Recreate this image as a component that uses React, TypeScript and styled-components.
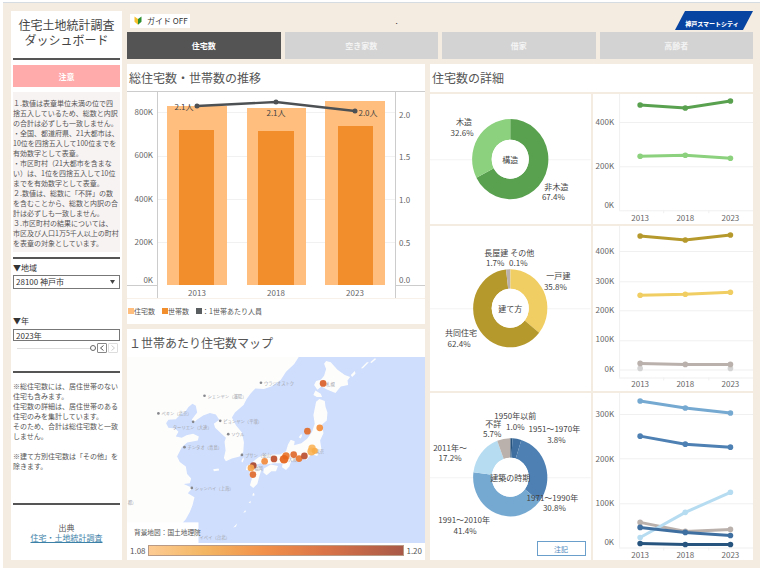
import React, { useState } from 'react';
import styled, { createGlobalStyle, css } from 'styled-components';

const JP = '"Noto Sans CJK JP", "Noto Sans", sans-serif';

const GlobalStyle = createGlobalStyle`
  * { box-sizing: border-box; }
  body { margin: 0; background: #fff; font-family: ${JP}; color: #555; }
  button, input, select { font-family: inherit; color: inherit; margin: 0; }
`;

const Page = styled.div`
  border-top: 1px solid #d5dce2;
  margin: 2px 0 2px 3px;
`;

const Board = styled.div`
  display: grid;
  grid-template-columns: 111fr 626fr;
  gap: 5px;
  padding: 8px 7px 8px 8px;
  background: #f5ece1;
`;

const Sidebar = styled.aside`
  display: flex;
  flex-direction: column;
  min-width: 0;
  padding: 0 2px;
  background: #fff;
`;

const Title = styled.h1`
  margin: 6px 0 11px;
  font-size: 12px;
  line-height: 15px;
  font-weight: 400;
  text-align: center;
  white-space: nowrap;
  color: #444;
`;

const Rule = styled.hr`
  width: 100%;
  height: 2px;
  margin: 0;
  border: 0;
  background: #555;
`;

const Notice = styled.button`
  height: 22px;
  margin: 5px 0;
  padding: 0;
  border: 0;
  background: #ffabab;
  font-size: 8px;
  font-weight: 700;
  && { color: #fff; }
`;

const Notes = styled.div<{ $shaded?: boolean }>`
  font-size: 7px;
  line-height: 10px;
  white-space: pre-line;
  ${(p) => p.$shaded && css`
    margin-bottom: 5px;
    padding: 6px 0 4px;
    background: #f8f3f3;
  `}
`;

const Field = styled.label`
  display: flex;
  flex-direction: column;
  font-size: 8px;
  line-height: 10px;
  color: #333;
`;

const control = css`
  width: 100%;
  padding: 0 2px;
  border: 1px solid #777;
  border-radius: 0;
  background: #fff;
  font-size: 8px;
  line-height: 10px;
`;

const SelectWrap = styled.span`
  display: grid;
  align-items: center;
  margin-top: 2px;
  & > * { grid-area: 1 / 1; }
  svg { justify-self: end; margin-right: 5px; pointer-events: none; }
`;

const Select = styled.select`
  ${control}
  height: 14px;
  appearance: none;
`;

const YearBox = styled.input`
  ${control}
  height: 12px;
  margin-top: 3px;
`;

const SliderRow = styled.div`
  display: flex;
  align-items: center;
  gap: 1px;
  margin: 2px 2px 18px 4px;
`;

const Slider = styled.input`
  flex: 1;
  min-width: 0;
  height: 8px;
  appearance: none;
  background: linear-gradient(#ddd, #ddd) center / 100% 1px no-repeat;
  &::-webkit-slider-thumb {
    appearance: none;
    width: 6px;
    height: 6px;
    border: 1px solid #666;
    border-radius: 50%;
    background: #fff;
  }
`;

const Step = styled.button<{ $faint?: boolean }>`
  display: flex;
  align-items: center;
  justify-content: center;
  width: 10px;
  height: 10px;
  padding: 0;
  border: 1px solid ${(p) => (p.$faint ? '#ddd' : '#888')};
  border-radius: 1px;
  background: #fff;
  && { color: ${(p) => (p.$faint ? '#ccc' : '#555')}; }
`;

const Source = styled.p`
  margin: 18px 0 12px;
  font-size: 8px;
  line-height: 10px;
  text-align: center;
  a { color: #3c82a8; }
`;

const Main = styled.main`
  display: flex;
  flex-direction: column;
  min-width: 0;
`;

const TopBar = styled.header`
  display: grid;
  grid-template-columns: 1fr auto 1fr;
  align-items: center;
  height: 19px;
  margin-bottom: 2px;
  padding-left: 3px;
  & > :last-child { justify-self: end; }
`;

const Guide = styled.button`
  display: flex;
  align-items: center;
  justify-self: start;
  gap: 5px;
  height: 14px;
  padding: 0 2px 0 4px;
  border: 0;
  background: #fff;
  font-size: 8px;
  && { color: #333; }
`;

const Dot = styled.span`
  padding-right: 90px;
  font-size: 8px;
  line-height: 8px;
  color: #222;
`;

const Tabs = styled.nav`
  display: grid;
  grid-template-columns: repeat(4, 1fr);
  gap: 4px;
  margin-bottom: 5px;
`;

const Tab = styled.button<{ $active: boolean }>`
  height: 27px;
  padding: 0;
  border: 0;
  background: ${(p) => (p.$active ? '#545454' : '#d3d3d3')};
  font-size: 8px;
  font-weight: 700;
  && { color: ${(p) => (p.$active ? '#fff' : '#f4f4f4')}; }
`;

const Columns = styled.div`
  display: grid;
  grid-template-columns: 298fr 323fr;
  gap: 5px;
  flex: 1;
`;

const Stack = styled.div<{ $gap: number }>`
  display: flex;
  flex-direction: column;
  gap: ${(p) => p.$gap}px;
  min-width: 0;
`;

const Panel = styled.section<{ $grow?: boolean }>`
  display: flex;
  flex-direction: column;
  min-width: 0;
  background: #fff;
  ${(p) => p.$grow && 'flex: 1;'}
`;

const Heading = styled.h2<{ $lined?: boolean }>`
  margin: 0;
  padding: 4px 2px;
  font-size: 12px;
  line-height: 19px;
  font-weight: 400;
  color: #555;
  border-bottom: 1px solid ${(p) => (p.$lined ? '#ccc' : '#fff')};
`;

const Drawing = styled.svg`
  display: block;
  width: 100%;
  height: auto;
`;

const AxisText = styled.text`
  font-family: ${JP};
  font-size: 8px;
  fill: #666;
  dominant-baseline: central;
`;

const LabelText = styled.text`
  font-family: ${JP};
  font-size: 8px;
  fill: #444;
  text-anchor: middle;
  dominant-baseline: central;
`;

const CityText = styled.text`
  font-family: ${JP};
  font-size: 13px;
  fill: #a3a5ab;
  dominant-baseline: central;
`;

const CreditText = styled(CityText)`
  font-size: 20px;
  fill: #555;
`;

const Legend = styled.ul`
  display: flex;
  gap: 7px;
  margin: 0;
  padding: 7px 1px 8px;
  border-top: 1px solid #f8f1ea;
  list-style: none;
  font-size: 7px;
  line-height: 10px;
`;

const LegendItem = styled.li<{ $color: string }>`
  display: flex;
  align-items: center;
  &::before {
    content: '';
    width: 6px;
    height: 6px;
    background: ${(p) => p.$color};
  }
`;

const Scale = styled.div`
  display: flex;
  align-items: center;
  gap: 2px;
  padding: 2px 3px 4px;
  font-size: 8px;
  line-height: 11px;
`;

const Ramp = styled.div`
  flex: 1;
  height: 11px;
  border: 1px solid #b99b85;
  background: linear-gradient(90deg, #fdcb93, #f3b662 22%, #f2914a 45%, #d97348 70%, #a85948);
`;

const DetailRow = styled.div`
  display: grid;
  grid-template-columns: 1fr 1fr;
  gap: 2px;
`;

const NoteRow = styled.div`
  display: flex;
  justify-content: flex-end;
  padding: 0 5px;
`;

const NoteButton = styled.button`
  width: 49px;
  height: 15px;
  padding: 0;
  border: 1px solid #6b9fcb;
  background: #fff;
  font-size: 7px;
  line-height: 10px;
  && { color: #4a87bd; }
`;

const Group = styled.div<{ $top: number; $bottom: number }>`
  padding: ${(p) => p.$top}px 0 ${(p) => p.$bottom}px;
`;

const LogoText = styled.text`
  font-family: ${JP};
  font-size: 6px;
  font-weight: 900;
  fill: #fff;
  text-anchor: middle;
  dominant-baseline: central;
`;

const YEARS = ['2013', '2018', '2023'];

function Combo() {
  const bars = [
    { x: 40, w: 60, y: 14, ix: 52, iw: 35, iy: 38 },
    { x: 120, w: 59, y: 16, ix: 131, iw: 36, iy: 39 },
    { x: 198, w: 60, y: 9, ix: 211, iw: 35, iy: 34 },
  ];
  const points = [[70, 14], [149, 10], [228, 19]];
  const left: [string, number][] = [['800K', 19], ['600K', 62], ['400K', 106], ['200K', 149], ['0K', 187]];
  const right: [string, number][] = [['2.0', 22], ['1.5', 64], ['1.0', 107], ['0.5', 150], ['0.0', 187]];
  return (
    <Drawing viewBox="0 0 298 206" role="img" aria-label="総住宅数・世帯数の推移">
      {[20, 64, 107, 150].map((y) => <path key={y} d={`M30 ${y}.5H268`} stroke="#f1f1f1" />)}
      {bars.map((b) => (
        <g key={b.x}>
          <rect x={b.x} y={b.y} width={b.w} height={193 - b.y} fill="#ffbe7d" />
          <rect x={b.ix} y={b.iy} width={b.iw} height={193 - b.iy} fill="#f28e2b" />
        </g>
      ))}
      <path d="M30.5 0V206M268.5 0V206M0 193.5H30M268 193.5H298" stroke="#ccc" fill="none" />
      <polyline points={points.map((p) => p.join(',')).join(' ')} fill="none" stroke="#4e5154" strokeWidth="2.4" />
      {points.map(([x, y]) => <circle key={x} cx={x} cy={y} r="2.5" fill="#4e5154" />)}
      <LabelText x="57" y="14">2.1人</LabelText>
      <LabelText x="149" y="20">2.1人</LabelText>
      <LabelText x="241" y="20">2.0人</LabelText>
      {left.map(([t, y]) => <AxisText key={t} x="26" y={y} textAnchor="end">{t}</AxisText>)}
      {right.map(([t, y]) => <AxisText key={t} x="272" y={y}>{t}</AxisText>)}
      {YEARS.map((t, i) => <AxisText key={t} x={points[i][0]} y="200" textAnchor="middle">{t}</AxisText>)}
    </Drawing>
  );
}

type Slice = { share: number; color: string };
type Tag = { name: string; x: number; y: number; value: string; vx: number; vy: number };
type DonutProps = { height: number; cy: number; rx: number; ry: number; title: string; slices: Slice[]; tags: Tag[] };

function Donut({ height, cy, rx, ry, title, slices, tags }: DonutProps) {
  const cx = 80;
  const at = (t: number, a: number, b: number) =>
    `${(cx + a * Math.sin(t * 2 * Math.PI)).toFixed(2)} ${(cy - b * Math.cos(t * 2 * Math.PI)).toFixed(2)}`;
  const total = slices.reduce((s, v) => s + v.share, 0);
  let start = 0;
  return (
    <Drawing viewBox={`0 0 160 ${height}`} role="img" aria-label={title}>
      <path d={`M0 ${cy}.5H160`} stroke="#f3f3f3" />
      {slices.map((s) => {
        const a = start;
        const b = start + s.share / total;
        start = b;
        const big = b - a > 0.5 ? 1 : 0;
        return (
          <path
            key={s.color}
            fill={s.color}
            d={`M${at(a, rx, ry)}A${rx} ${ry} 0 ${big} 1 ${at(b, rx, ry)}L${at(b, 18.5, 19.5)}A18.5 19.5 0 ${big} 0 ${at(a, 18.5, 19.5)}Z`}
          />
        );
      })}
      <ellipse cx={cx} cy={cy} rx="18.5" ry="19.5" fill="#fff" />
      <LabelText x={cx} y={cy}>{title}</LabelText>
      {tags.map((t) => (
        <g key={t.name}>
          <LabelText x={t.x} y={t.y}>{t.name}</LabelText>
          <LabelText x={t.vx} y={t.vy}>{t.value}</LabelText>
        </g>
      ))}
    </Drawing>
  );
}

type LinesProps = {
  label: string; height: number; grid: number[]; base: number; yearY: number;
  ticks: [string, number][]; series: { color: string; ys: number[] }[]; strays?: number[][];
};

function Lines({ label, height, grid, base, yearY, ticks, series, strays = [] }: LinesProps) {
  const xs = [47, 92, 137];
  return (
    <Drawing viewBox={`0 0 160 ${height}`} role="img" aria-label={label}>
      {[...grid, base].map((y) => <path key={y} d={`M26 ${y}.5H160`} stroke="#f0f0f0" />)}
      <path d={`M26.5 0V${base}M70.5 ${base}v3M115.5 ${base}v3`} stroke="#f0f0f0" />
      {strays.map(([i, y]) => <circle key={i} cx={xs[i]} cy={y} r="2.8" fill="#d3d3d3" />)}
      {series.map((s) => (
        <g key={s.color}>
          <polyline points={s.ys.map((y, i) => `${xs[i]},${y}`).join(' ')} fill="none" stroke={s.color} strokeWidth="3" />
          {s.ys.map((y, i) => <circle key={i} cx={xs[i]} cy={y} r="2.8" fill={s.color} />)}
        </g>
      ))}
      {ticks.map(([t, y]) => <AxisText key={t} x="21" y={y} textAnchor="end">{t}</AxisText>)}
      {YEARS.map((t, i) => <AxisText key={t} x={xs[i]} y={yearY} textAnchor="middle">{t}</AxisText>)}
    </Drawing>
  );
}

const CITIES: [string, number, number, boolean][] = [
  ['ウラジオストク', 409, 173, true],
  ['シェンヤン（瀋陽）', 240, 212, true],
  ['ペキン（北京）', 102, 265, true],
  ['ピョンヤン（平壌）', 287, 287, true],
  ['ソウル', 311, 327, true],
  ['チンタオ（青島）', 180, 366, true],
  ['プサン（釜山）', 352, 389, true],
  ['シャンハイ（上海）', 202, 488, true],
  ['ターリエン（大連）', 136, 307, false],
  ['イペイ（台北）', 216, 634, false],
  ['札幌', 595, 178, false],
  ['東京', 563, 377, false],
  ['福岡', 380, 429, false],
  ['大阪', 482, 402, false],
  ['都）', 1, 529, false],
];

const PINS: [number, number, number, string][] = [
  [595, 175, 10, '#d9622b'], [585, 308, 10, '#f28e3b'], [548, 318, 10, '#e06d2c'],
  [386, 421, 10, '#a8482f'], [379, 428, 10, '#f6a650'], [385, 448, 10, '#df6a2f'],
  [420, 408, 10, '#f08b3c'], [448, 401, 10, '#bd4f2c'], [484, 392, 11, '#e9772f'],
  [507, 388, 10, '#e06c30'], [523, 400, 10, '#e9772f'], [539, 392, 10, '#bb5030'],
  [478, 402, 13, '#e5641c'], [562, 369, 11, '#fbb75e'], [560, 379, 12, '#fbb456'], [570, 377, 9, '#f8ac48'],
];

function MapView() {
  return (
    <Drawing viewBox="8 96 892 557" role="img" aria-label="日本周辺の地図">
      <rect x="8" y="96" width="892" height="557" fill="#cfdefd" />
      <g fill="#fdfdfc">
        <path d="M8 96H522L508 118L484 140L468 165L440 184L418 192L392 190L378 205L366 222L357 240L331 262L322 277L334 300L352 322L358 352L356 380L345 394L322 400L304 408L298 398L303 376L300 350L304 338L290 325L272 308L268 296L284 284L274 268L256 264L236 271L217 284L207 293L202 283L218 262L214 242L204 236L192 246L184 258L168 268L154 282L132 284L125 294L132 308L152 310L162 320L154 334L172 338L186 330L206 326L223 334L220 346L188 352L172 366L158 394L166 410L184 424L188 446L200 460L196 474L178 476L204 488L190 504L210 516L204 540L196 560L184 582L162 606L150 624L130 642L8 653Z" />
        <path d="M604 108L618 112L638 134L660 150L676 156L668 166L670 180L648 184L632 204L608 194L590 184L578 194L568 180L574 168L588 164L598 152L604 132L598 116ZM572 196L588 206L592 216L576 216L566 210Z" />
        <path d="M574 230L584 222L600 228L602 244L608 262L606 286L592 298L596 324L586 346L590 372L577 392L560 386L545 404L528 400L520 408L500 406L494 424L484 434L472 426L474 414L450 414L424 418L408 414L390 420L384 410L402 396L420 388L446 388L466 388L484 378L490 358L498 344L510 348L508 360L530 354L548 340L562 320L570 296L566 270Z" />
        <path d="M418 430L438 418L460 422L454 438L440 438L426 450L416 442ZM366 422L382 414L400 422L410 434L404 454L398 476L386 488L376 480L382 460L374 450L376 436L364 434Z" />
        <path d="M678 150L690 138L692 146L682 156ZM708 130L726 112L732 112L714 130ZM736 112L750 100L754 102L740 114ZM266 432L282 430L284 436L268 438ZM350 408L356 396L358 402L354 412ZM522 336L530 326L532 332L528 340ZM384 506L388 502L390 510L384 512ZM372 532L378 526L378 534ZM356 562L362 554L364 560ZM326 606L338 594L334 604Z" />
      </g>
      {CITIES.map(([name, x, y, dot]) => (
        <g key={name}>
          {dot && <circle cx={x} cy={y} r="4" fill="#85878c" />}
          <CityText x={x + 9} y={y}>{name}</CityText>
        </g>
      ))}
      <circle cx="206" cy="290" r="4" fill="#85878c" />
      {PINS.map(([x, y, r, c]) => <circle key={`${x}-${y}`} cx={x} cy={y} r={r} fill={c} opacity="0.93" />)}
      <rect x="8" y="591" width="214" height="62" fill="#fff" />
      <CreditText x="29" y="621">背景地図：国土地理院</CreditText>
    </Drawing>
  );
}

const NOTE_TOP = `１.数値は表章単位未満の位で四
捨五入しているため、総数と内訳
の合計は必ずしも一致しません。
・全国、都道府県、21大都市は、
10位を四捨五入して100位までを
有効数字として表章。
・市区町村（21大都市を含まな
い）は、1位を四捨五入して10位
までを有効数字として表章。
２.数値は、総数に「不詳」の数
を含むことから、総数と内訳の合
計は必ずしも一致しません。
３.市区町村の結果については、
市区及び人口1万5千人以上の町村
を表章の対象としています。`;

const NOTE_BOTTOM = `※総住宅数には、居住世帯のない
住宅も含みます。
住宅数の詳細は、居住世帯のある
住宅のみを集計しています。
そのため、合計は総住宅数と一致
しません。

※建て方別住宅数は「その他」を
除きます。`;

export default function App() {
  const [tab, setTab] = useState('住宅数');
  const [year, setYear] = useState(2023);
  return (
    <>
      <GlobalStyle />
      <Page lang="ja">
        <Board>
          <Sidebar>
            <Title>住宅土地統計調査<br />ダッシュボード</Title>
            <Rule />
            <Notice type="button">注意</Notice>
            <Notes $shaded>{NOTE_TOP}</Notes>
            <Rule />
            <Group $top={4} $bottom={27}>
              <Field>
                ▼地域
                <SelectWrap>
                  <Select defaultValue="28100"><option value="28100">28100 神戸市</option></Select>
                  <svg width="5" height="4" viewBox="0 0 5 4"><path d="M0 0H5L2.5 4Z" fill="#444" /></svg>
                </SelectWrap>
              </Field>
            </Group>
            <Field>
              ▼年
              <YearBox value={`${year}年`} readOnly />
            </Field>
            <SliderRow>
              <Slider type="range" aria-label="年" min={2013} max={2023} step={5} value={year} onChange={(e) => setYear(Number(e.target.value))} />
              <Step type="button" aria-label="前の年" onClick={() => setYear(Math.max(2013, year - 5))}>
                <svg width="6" height="6" viewBox="0 0 6 6"><path d="M4.5 .5L1.5 3L4.5 5.5" fill="none" stroke="currentColor" /></svg>
              </Step>
              <Step type="button" aria-label="次の年" $faint={year === 2023} onClick={() => setYear(Math.min(2023, year + 5))}>
                <svg width="6" height="6" viewBox="0 0 6 6"><path d="M1.5 .5L4.5 3L1.5 5.5" fill="none" stroke="currentColor" /></svg>
              </Step>
            </SliderRow>
            <Rule />
            <Group $top={8} $bottom={32}><Notes>{NOTE_BOTTOM}</Notes></Group>
            <Rule />
            <Source>出典<br /><a href="#source">住宅・土地統計調査</a></Source>
          </Sidebar>

          <Main>
            <TopBar>
              <Guide type="button">
                <svg width="8" height="9" viewBox="0 0 8 9">
                  <path d="M.5 .5L4 3V8.7L.5 5.8Z" fill="#f5c02c" />
                  <path d="M7.5 .5L4 3V8.7L7.5 5.8Z" fill="#2f8f2f" />
                </svg>
                ガイド OFF
              </Guide>
              <Dot>.</Dot>
              <svg width="78" height="19" viewBox="0 0 78 19" role="img" aria-label="神戸スマートシティ">
                <path d="M10 0H78L68 19H0Z" fill="#0743a1" />
                <LogoText x="37" y="12">神戸スマートシティ</LogoText>
              </svg>
            </TopBar>
            <Tabs>
              {['住宅数', '空き家数', '借家', '高齢者'].map((t) => (
                <Tab key={t} type="button" $active={t === tab} onClick={() => setTab(t)}>{t}</Tab>
              ))}
            </Tabs>
            <Columns>
              <Stack $gap={5}>
                <Panel>
                  <Heading $lined>総住宅数・世帯数の推移</Heading>
                  <Combo />
                  <Legend>
                    <LegendItem $color="#ffbe7d">住宅数</LegendItem>
                    <LegendItem $color="#f28e2b">世帯数</LegendItem>
                    <LegendItem $color="#5a5d60">：1世帯あたり人員</LegendItem>
                  </Legend>
                </Panel>
                <Panel $grow>
                  <Heading>１世帯あたり住宅数マップ</Heading>
                  <MapView />
                  <Scale>1.08<Ramp />1.20</Scale>
                </Panel>
              </Stack>
              <Stack $gap={2}>
                <Panel><Heading>住宅数の詳細</Heading></Panel>
                <DetailRow>
                  <Panel>
                    <Donut
                      height={130} cy={65} rx={38} ry={40} title="構造"
                      slices={[{ share: 67.4, color: '#59a14f' }, { share: 32.6, color: '#8cd17d' }]}
                      tags={[
                        { name: '木造', x: 34, y: 27, value: '32.6%', vx: 32, vy: 38 },
                        { name: '非木造', x: 126, y: 92, value: '67.4%', vx: 123, vy: 102 },
                      ]}
                    />
                  </Panel>
                  <Panel>
                    <Lines
                      label="構造別の推移" height={130} grid={[28, 72]} base={116} yearY={123}
                      ticks={[['400K', 27], ['200K', 71], ['0K', 110]]}
                      series={[{ color: '#59a14f', ys: [11, 14, 7] }, { color: '#8cd17d', ys: [62, 61, 64] }]}
                    />
                  </Panel>
                </DetailRow>
                <DetailRow>
                  <Panel>
                    <Donut
                      height={164} cy={82} rx={37} ry={39} title="建て方"
                      slices={[
                        { share: 35.8, color: '#f1ce63' }, { share: 62.4, color: '#b6992d' },
                        { share: 1.7, color: '#bab0ac' }, { share: 0.1, color: '#d3d3d3' },
                      ]}
                      tags={[
                        { name: '長屋建', x: 66, y: 26, value: '1.7%', vx: 65, vy: 36 },
                        { name: 'その他', x: 92, y: 26, value: '0.1%', vx: 88, vy: 36 },
                        { name: '一戸建', x: 128, y: 49, value: '35.8%', vx: 125, vy: 60 },
                        { name: '共同住宅', x: 31, y: 106, value: '62.4%', vx: 29, vy: 117 },
                      ]}
                    />
                  </Panel>
                  <Panel>
                    <Lines
                      label="建て方別の推移" height={164} grid={[25, 55, 84, 114, 143]} base={151} yearY={157}
                      ticks={[['400K', 24], ['300K', 54], ['200K', 83], ['100K', 112], ['0K', 142]]}
                      series={[
                        { color: '#b6992d', ys: [10, 14, 9] }, { color: '#f1ce63', ys: [69, 68, 66] },
                        { color: '#bab0ac', ys: [137, 138, 138] },
                      ]}
                      strays={[[0, 142], [2, 142]]}
                    />
                  </Panel>
                </DetailRow>
                <DetailRow>
                  <Panel>
                    <Donut
                      height={148} cy={84} rx={37} ry={39} title="建築の時期"
                      slices={[
                        { share: 1, color: '#26547f' }, { share: 3.8, color: '#3e6fa0' },
                        { share: 30.8, color: '#4e80b3' }, { share: 41.4, color: '#76a9d1' },
                        { share: 17.2, color: '#b6dcf1' }, { share: 5.7, color: '#bab0ac' },
                      ]}
                      tags={[
                        { name: '1950年以前', x: 85, y: 22, value: '1.0%', vx: 85, vy: 33 },
                        { name: '不詳', x: 63, y: 30, value: '5.7%', vx: 62, vy: 40 },
                        { name: '1951～1970年', x: 124, y: 35, value: '3.8%', vx: 126, vy: 46 },
                        { name: '2011年～', x: 20, y: 54, value: '17.2%', vx: 20, vy: 64 },
                        { name: '1971～1990年', x: 122, y: 104, value: '30.8%', vx: 124, vy: 114 },
                        { name: '1991～2010年', x: 34, y: 126, value: '41.4%', vx: 35, vy: 137 },
                      ]}
                    />
                    <NoteRow><NoteButton type="button">注記</NoteButton></NoteRow>
                  </Panel>
                  <Panel>
                    <Lines
                      label="建築の時期別の推移" height={167} grid={[21, 65, 110]} base={154} yearY={161}
                      ticks={[['300K', 20], ['200K', 65], ['100K', 109], ['0K', 148]]}
                      series={[
                        { color: '#76a9d1', ys: [8, 15, 20] }, { color: '#4e80b3', ys: [43, 51, 54] },
                        { color: '#bab0ac', ys: [129, 138, 136] }, { color: '#b6dcf1', ys: [144, 119, 99] },
                        { color: '#3e6fa0', ys: [134, 139, 142] }, { color: '#26547f', ys: [150, 151, 151] },
                      ]}
                    />
                  </Panel>
                </DetailRow>
              </Stack>
            </Columns>
          </Main>
        </Board>
      </Page>
    </>
  );
}
